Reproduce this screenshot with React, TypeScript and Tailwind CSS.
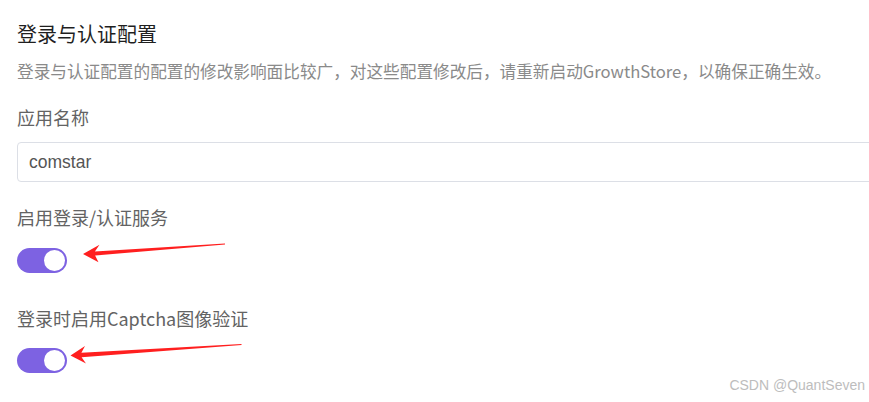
import React from 'react';

const cjk = { fontFamily: '"Noto Sans CJK SC", "Noto Sans", sans-serif' };

// 开关组件（只读展示）
function Toggle({ on = true }: { on?: boolean }) {
  return (
    <div
      className={
        on
          ? 'flex h-[25px] w-[50px] items-center justify-end rounded-full bg-[#7d62e2] pr-[2px]'
          : 'flex h-[25px] w-[50px] items-center justify-start rounded-full bg-[#dcdfe6] pl-[2px]'
      }
    >
      <div className="h-[21px] w-[21px] rounded-full bg-white" />
    </div>
  );
}

// 红色标注箭头
function Arrows() {
  return (
    <svg className="pointer-events-none absolute left-0 top-0" width="869" height="402">
      <polygon
        fill="#ff1f1f"
        points="83,254 99.5,244.8 94.9,251.4 225,243.6 225,244.6 95.1,255.6 98.5,262.2"
      />
      <polygon
        fill="#ff1f1f"
        points="70.5,355.5 85,346 81.4,352.8 241.5,344 241.5,345 81.6,357.2 86,363.4"
      />
    </svg>
  );
}

export default function App() {
  return (
    <div className="relative h-[402px] w-[869px] overflow-hidden bg-white" style={cjk}>
      <div className="flex flex-col pl-[17px] pt-[20px]">
        <h1 className="text-[20px] leading-[28px] font-normal text-[#1f1f1f]">登录与认证配置</h1>
        <p className="mt-[11px] text-[16.65px] leading-[24px] text-[#8a8a8a] whitespace-nowrap">
          登录与认证配置的配置的修改影响面比较广，对这些配置修改后，请重新启动GrowthStore，以确保正确生效。
        </p>

        <label className="mt-[21px] text-[18px] leading-[26px] text-[#636363]">应用名称</label>
        <div className="mt-[12px] flex h-[40px] w-[900px] items-center rounded-[4px] border border-[#dcdfe6] px-[11px]">
          <span
            className="text-[17.5px] text-[#555]"
            style={{ fontFamily: '"Liberation Sans", Arial, sans-serif' }}
          >
            comstar
          </span>
        </div>

        <label className="mt-[22px] text-[18px] leading-[26px] text-[#636363]">启用登录/认证服务</label>
        <div className="mt-[18px]">
          <Toggle />
        </div>

        <label className="mt-[32px] text-[18px] leading-[26px] text-[#636363]">登录时启用Captcha图像验证</label>
        <div className="mt-[17px]">
          <Toggle />
        </div>
      </div>

      <Arrows />

      <div
        className="absolute right-[4px] top-[376px] text-[14px] leading-[18px] text-[#bdbdbd]"
        style={{ fontFamily: '"Liberation Sans", Arial, sans-serif' }}
      >
        CSDN @QuantSeven
      </div>
    </div>
  );
}
